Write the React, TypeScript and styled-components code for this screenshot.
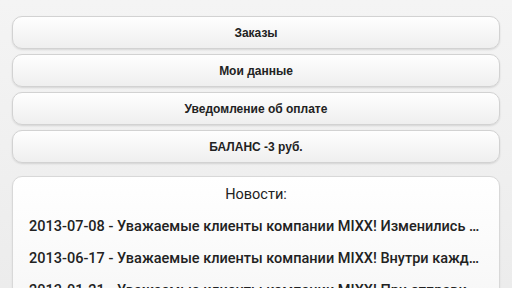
import React from "react";
import styled, { createGlobalStyle } from "styled-components";

const Global = createGlobalStyle`
  html, body { margin: 0; padding: 0; }
  body {
    width: 512px;
    height: 288px;
    overflow: hidden;
    background: linear-gradient(#f4f4f4, #ececec);
    font-family: Roboto, "Noto Sans", sans-serif;
  }
`;

const Page = styled.div`
  display: flex;
  flex-direction: column;
  padding: 16px 12px 0 12px;
  box-sizing: border-box;
  width: 512px;
  height: 288px;
  overflow: hidden;
`;

const Menu = styled.div`
  display: flex;
  flex-direction: column;
  gap: 5px;
`;

const Button = styled.div`
  height: 31px;
  border: 1px solid #d2d2d2;
  border-radius: 10px;
  background: linear-gradient(#fefefe, #efefef);
  box-shadow: 0 1px 2px rgba(0, 0, 0, 0.12);
  display: flex;
  align-items: center;
  justify-content: center;
  font-family: "Liberation Sans", Arial, sans-serif;
  font-weight: bold;
  font-size: 12px;
  color: #222;
`;

const Card = styled.div`
  margin-top: 13px;
  border: 1px solid #d8d8d8;
  border-radius: 10px;
  background: linear-gradient(#ffffff, #f6f6f6);
  box-shadow: 0 1px 2px rgba(0, 0, 0, 0.08);
  padding: 8px 16px 0 16px;
  display: flex;
  flex-direction: column;
  flex-shrink: 0;
`;

const Title = styled.div`
  text-align: center;
  font-size: 14.5px;
  color: #222;
  height: 20px;
  line-height: 20px;
  margin-bottom: 12px;
`;

const Item = styled.div`
  font-size: 14.5px;
  font-weight: 500;
  color: #222;
  line-height: 20px;
  height: 20px;
  margin-bottom: 12px;
  white-space: nowrap;
  overflow: hidden;
  text-overflow: ellipsis;
`;

const buttons = ["Заказы", "Мои данные", "Уведомление об оплате", "БАЛАНС -3 руб."];
const news = [
  "2013-07-08 - Уважаемые клиенты компании MIXX! Изменились условия доставки",
  "2013-06-17 - Уважаемые клиенты компании MIXX! Внутри каждого заказа",
  "2013-01-21 - Уважаемые клиенты компании MIXX! При отправке заказа",
];

export default function App() {
  return (
    <>
      <Global />
      <Page>
        <Menu>
          {buttons.map((b) => (
            <Button key={b}>{b}</Button>
          ))}
        </Menu>
        <Card>
          <Title>Новости:</Title>
          {news.map((n) => (
            <Item key={n}>{n}</Item>
          ))}
        </Card>
      </Page>
    </>
  );
}
